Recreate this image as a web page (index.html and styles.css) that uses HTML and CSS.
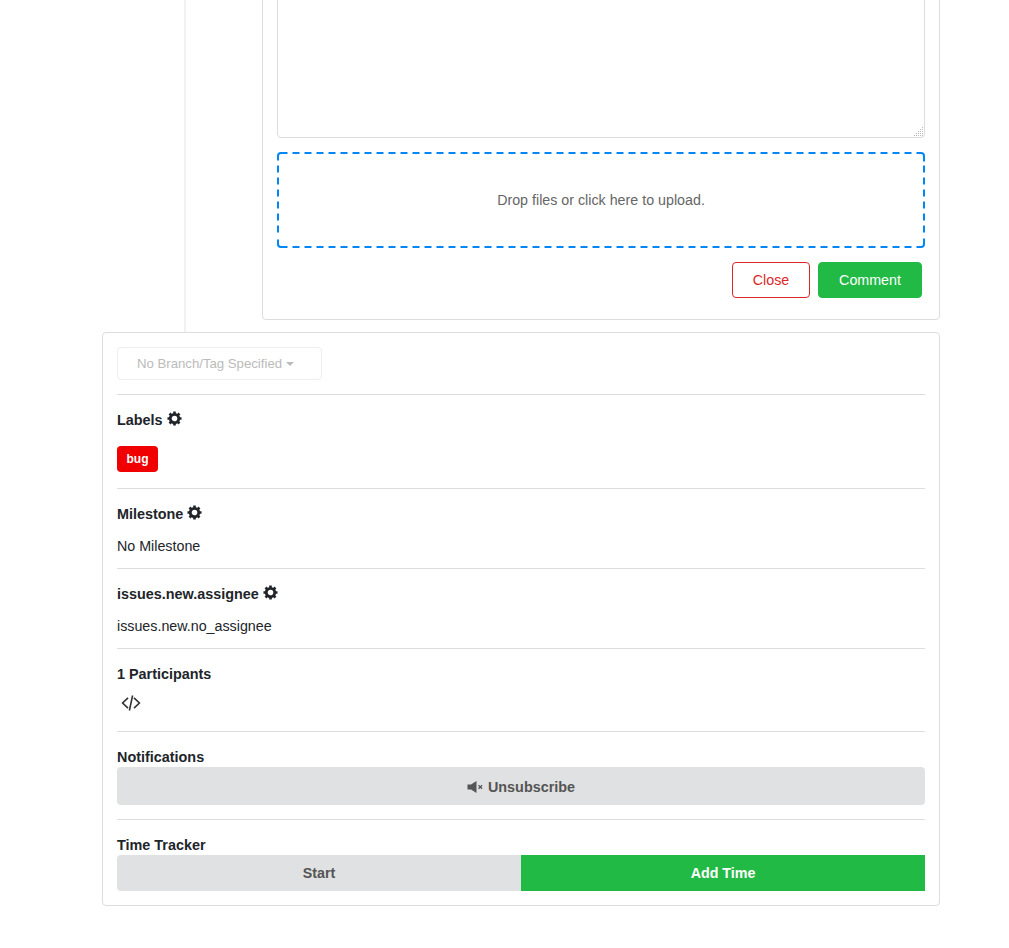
FILE: index.html
```html
<!DOCTYPE html>
<html lang="en">
<head>
<meta charset="utf-8">
<title>Issue</title>
<link rel="stylesheet" href="styles.css">
</head>
<body>
<svg class="defs" aria-hidden="true"><symbol id="cog" viewBox="0 0 16 16"><g class="cog-shape"><circle cx="8" cy="8" r="4.5"/><path class="cog-teeth" d="M8 .5v3M8 12.500v3M.5 8h3M12.500 8h3M2.700 2.700l2.100 2.100M11.200 11.200l2.100 2.100M13.300 2.700l-2.100 2.100M4.800 11.200l-2.100 2.100"/></g></symbol></svg>
<main class="page">
  <div class="rail">
    <div class="comment-card">
      <div class="editor">
        <svg class="grip" viewBox="0 0 11 11"><path d="M9 1h1v1H9zM7 3h1v1H7zM9 3h1v1H9zM5 5h1v1H5zM7 5h1v1H7zM9 5h1v1H9zM3 7h1v1H3zM5 7h1v1H5zM7 7h1v1H7zM9 7h1v1H9zM1 9h1v1H1zM3 9h1v1H3zM5 9h1v1H5zM7 9h1v1H7zM9 9h1v1H9z"/></svg>
      </div>
      <div class="dropzone">
        <svg class="dash" viewBox="0 0 648 96">
          <path class="dash-side" d="M15.500 1H635M15.500 95H635M1 13.500V81M647 13.500V81"/>
          <path class="dash-corner" d="M1 8.500V4A3 3 0 0 1 4 1H10.500M639.500 1H644A3 3 0 0 1 647 4V9.500M1 87.500V92A3 3 0 0 0 4 95H10.500M639.500 95H644A3 3 0 0 0 647 92V86.500"/>
        </svg>
        Drop files or click here to upload.
      </div>
      <div class="actions">
        <button class="btn btn-close">Close</button>
        <button class="btn btn-comment">Comment</button>
      </div>
    </div>
  </div>
  <aside class="sidebar">
    <div class="branch-row">
      <button class="branch">No Branch/Tag Specified<span class="caret"></span></button>
    </div>
    <section class="sec sec-labels">
      <h3 class="title">Labels <svg class="cog"><use href="#cog"/></svg></h3>
      <span class="label-bug">bug</span>
    </section>
    <section class="sec">
      <h3 class="title">Milestone <svg class="cog"><use href="#cog"/></svg></h3>
      <p class="value">No Milestone</p>
    </section>
    <section class="sec">
      <h3 class="title">issues.new.assignee <svg class="cog"><use href="#cog"/></svg></h3>
      <p class="value">issues.new.no_assignee</p>
    </section>
    <section class="sec sec-part">
      <h3 class="title">1 Participants</h3>
      <svg class="code" viewBox="0 0 20 18"><path d="M7 3.800 1.600 9 7 14.200M13 3.800 18.400 9 13 14.200M11.600 1.500 8.400 16.500"/></svg>
    </section>
    <section class="sec sec-notif">
      <h3 class="title">Notifications</h3>
      <button class="wide">
        <svg class="mute" viewBox="0 0 17 14"><path class="mute-body" d="M.5 4.500h3.500l5.500-3.500v12L4 9.500H.5z"/><path class="mute-x" d="M11.500 5.200l3.600 3.600M15.100 5.200l-3.600 3.600"/></svg>
        Unsubscribe
      </button>
    </section>
    <section class="sec sec-time">
      <h3 class="title">Time Tracker</h3>
      <div class="time-btns">
        <button class="time start">Start</button>
        <button class="time add">Add Time</button>
      </div>
    </section>
  </aside>
</main>
</body>
</html>
```
FILE: styles.css
```css
* { box-sizing: border-box; }
html, body { margin: 0; padding: 0; background: #fff; }
body {
  font-family: "Liberation Sans", Arial, sans-serif;
  font-size: 14.28px;
  line-height: 21px;
  color: #212529;
  height: 948px;
  overflow: hidden;
}
.defs { display: none; }
.page { width: 838px; margin: -31px 0 0 102px; }
.rail {
  margin-left: 82px;
  border-left: 2px solid #f1f1f1;
  padding: 0 0 12px 76px;
}
.comment-card {
  border: 1px solid #ddd;
  border-radius: 4px;
  padding: 14px 14px 21px;
}
.editor {
  height: 154px;
  border: 1px solid #ddd;
  border-radius: 4px;
  position: relative;
}
.grip { position: absolute; right: 0; bottom: 0; width: 11px; height: 11px; fill: #bbb; }
.dropzone {
  position: relative;
  height: 96px;
  margin-top: 14px;
  color: #666;
  display: flex;
  align-items: center;
  justify-content: center;
}
.dash { position: absolute; inset: 0; width: 100%; height: 100%; fill: none; stroke: #0087f5; stroke-width: 2; }
.dash-side { stroke-dasharray: 7 5; }
.actions {
  display: flex;
  justify-content: flex-end;
  gap: 8px;
  margin-top: 14px;
  padding-right: 3px;
}
.btn {
  height: 36px;
  border-radius: 4px;
  font: inherit;
  background: #fff;
}
.btn-close { width: 78px; border: 1px solid #db2828; color: #db2828; }
.btn-comment { width: 104px; border: 1px solid #21ba45; background: #21ba45; color: #fff; }
.sidebar {
  border: 1px solid #ddd;
  border-radius: 4px;
  padding: 14px;
}
.branch-row { padding-bottom: 14px; }
.branch {
  display: block;
  width: 205px;
  height: 33px;
  padding: 0 8px 0 0;
  border: 1px solid #eee;
  border-radius: 4px;
  background: #fff;
  color: #bbb;
  font: 13.2px "Liberation Sans", Arial, sans-serif;
}
.caret {
  display: inline-block;
  margin-left: 4px;
  vertical-align: 2px;
  border: 4px solid transparent;
  border-top: 4px solid #bbb;
  border-bottom: 0;
}
.sec { border-top: 1px solid #ddd; padding: 15px 0 11px; }
.title {
  margin: 0;
  font-size: 14.4px;
  line-height: 20px;
  font-weight: 700;
  color: #212529;
}
.cog { width: 15px; height: 15px; vertical-align: -1px; }
.cog-shape { fill: none; stroke: #212529; stroke-width: 3; }
.cog-teeth { stroke-width: 2.800; }
.value { margin: 12px 0 0; }
.sec-labels { padding-bottom: 16px; }
.label-bug {
  display: block;
  width: 41px;
  height: 26px;
  margin-top: 16px;
  border-radius: 4px;
  background: #f00000;
  color: #fff;
  font-size: 12px;
  font-weight: 700;
  line-height: 26px;
  text-align: center;
}
.sec-part { padding-bottom: 19px; }
.code {
  display: block;
  width: 20px;
  height: 18px;
  margin: 10px 0 0 4px;
  fill: none;
  stroke: #333;
  stroke-width: 1.6;
}
.sec-notif { padding-bottom: 14px; }
.wide {
  display: block;
  width: 100%;
  height: 38px;
  margin-top: 0;
  padding: 2px 0 0;
  border: 0;
  border-radius: 4px;
  background: #e0e1e2;
  color: #555;
  font: 700 14.4px "Liberation Sans", Arial, sans-serif;
}
.mute { width: 17px; height: 14px; vertical-align: -2px; }
.mute-body { fill: #555; }
.mute-x { fill: none; stroke: #555; stroke-width: 1.3; }
.sec-time { padding-bottom: 0; }
.time-btns { display: flex; }
.time {
  flex: 1;
  height: 36px;
  border: 0;
  font: 700 14.28px "Liberation Sans", Arial, sans-serif;
}
.start { background: #e0e1e2; color: #555; border-radius: 4px 0 0 4px; }
.add { background: #21ba45; color: #fff; }
```
